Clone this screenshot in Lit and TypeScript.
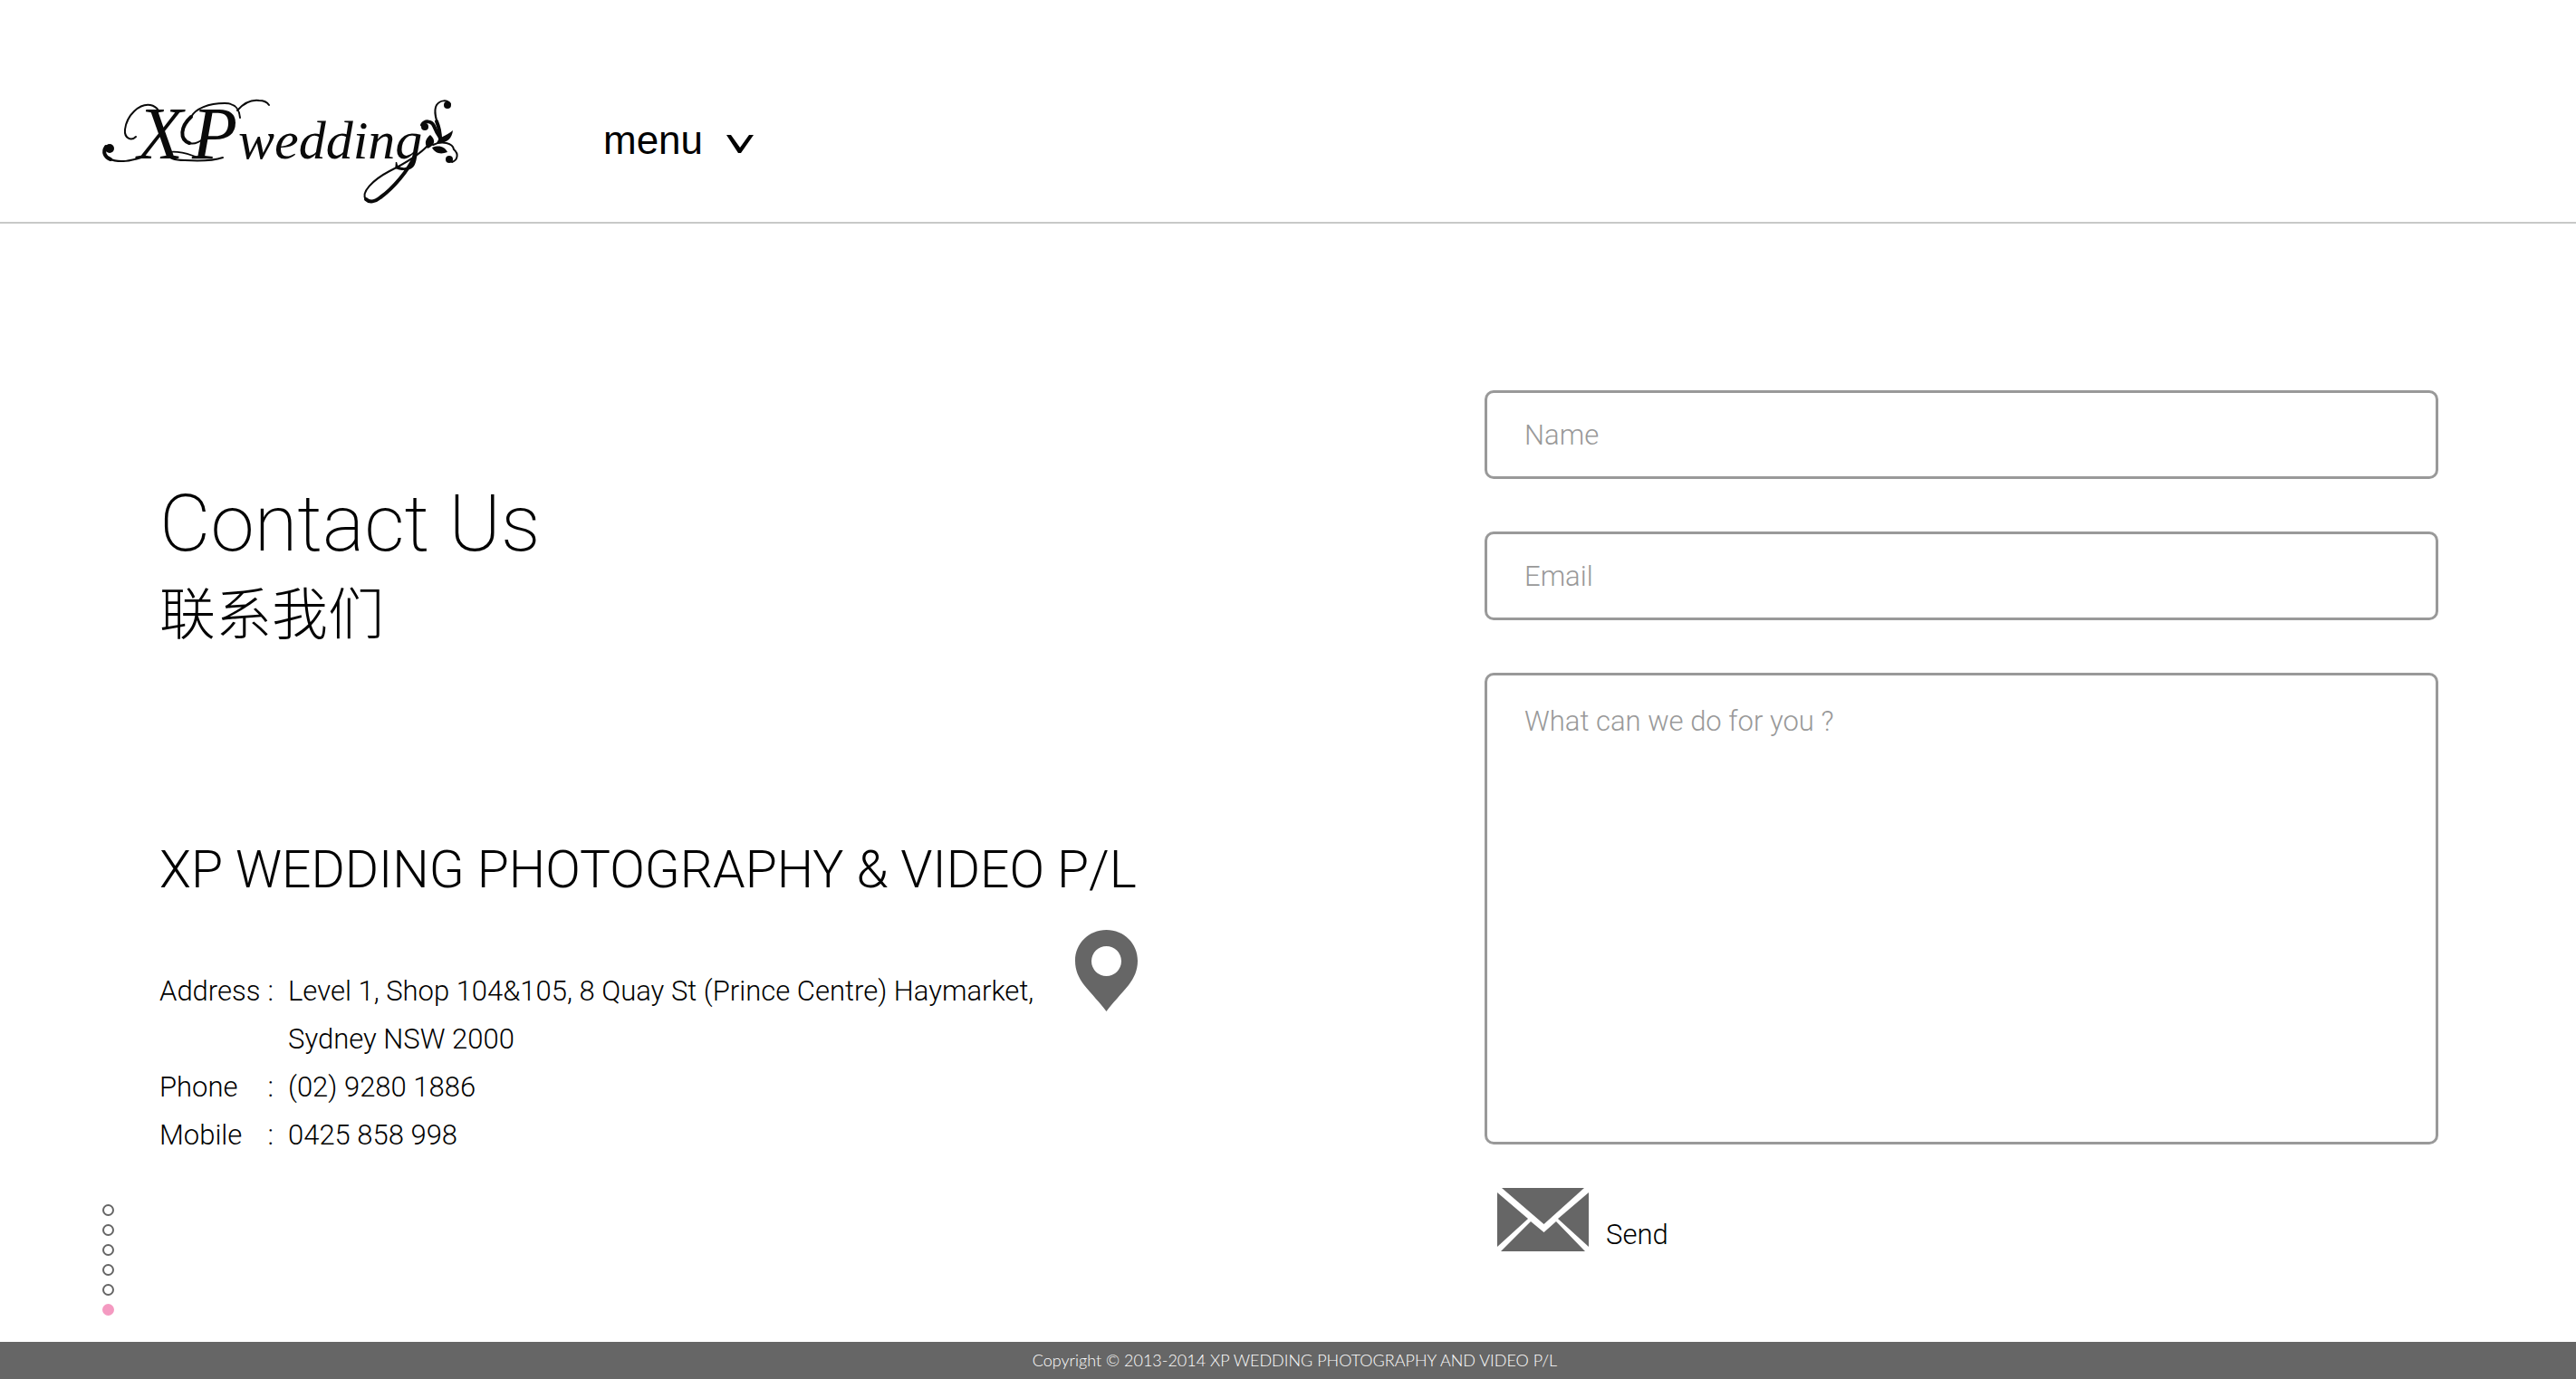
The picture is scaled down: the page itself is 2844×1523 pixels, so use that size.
import { LitElement, html, css, svg } from "lit";
import { customElement, state } from "lit/decorators.js";
import { classMap } from "lit/directives/class-map.js";

const SECTIONS = ["Home", "About", "Gallery", "Packages", "Video", "Contact"];

@customElement("xp-logo")
class XpLogo extends LitElement {
  static styles = css`
    :host {
      display: block;
    }
    .logo {
      display: block;
      width: 394px;
      height: 114px;
      overflow: visible;
    }
    .word {
      font-family: "Liberation Serif", serif;
      font-style: italic;
      fill: #0a0a0a;
    }
    .capital {
      font-size: 82px;
    }
    .small {
      font-size: 60px;
    }
    .hair {
      fill: none;
      stroke: #0a0a0a;
      stroke-linecap: round;
      stroke-width: 2;
    }
    .bold {
      stroke-width: 4;
    }
    .leaf {
      fill: #0a0a0a;
    }
  `;

  render() {
    return html`
      <svg class="logo" viewBox="0 0 394 114" role="img" aria-label="XPwedding">
        <text class="word capital" x="40" y="65">X</text>
        <text class="word capital" x="100" y="65">P</text>
        <text class="word small" x="151" y="65">wedding</text>
        ${svg`
          <circle class="leaf" cx="9" cy="54" r="5" />
          <path class="hair bold" d="M5 52C1 58 4 64 10 66" />
          <path class="hair" d="M8 65C20 71 34 67 44 64" />
          <path class="hair" d="M38 41C33 46 25 43 26 33C28 17 42 4 54 6C59 7 61 9 63 12" />
          <path class="hair" d="M153 20C152 9 147 4 136 4C118 4 104 10 99 19" />
          <path class="hair bold" d="M99 19C87 30 86 44 97 48" />
          <path class="hair" d="M97 48C103 50 108 47 113 43" />
          <path class="hair" d="M134 64C122 68 108 68 92 67C80 67 73 64 73 60C74 56 90 57 106 64" />
          <path class="hair" d="M150 12C157 4 166 0 174 1C179 1 183 3 185 6" />
          <path class="hair bold" d="M346 62C339 78 322 98 308 108C302 113 296 114 292 110" />
          <path class="hair" d="M292 110C286 103 299 89 318 79C334 71 350 62 361 50" />
          <circle class="leaf" cx="382" cy="6" r="4" />
          <path class="hair" d="M385 5C382 0 374 0 370 6C366 13 370 24 373 32" />
          <path class="hair bold" d="M370 24C373 31 374 37 374 44" />
          <circle class="leaf" cx="357" cy="30" r="4" />
          <path class="hair bold" d="M354 28C357 23 364 23 367 29C369 34 371 38 374 42" />
          <path class="leaf" d="M388 34C387 43 381 49 370 48C373 40 380 41 388 34Z" />
          <path class="leaf" d="M363 39C369 44 369 50 360 54C356 48 358 43 363 39Z" />
          <path class="hair" d="M366 50C376 45 388 48 389 55C395 60 393 67 387 69" />
          <path class="leaf" d="M365 53C373 50 379 52 382 58C374 61 368 59 365 53Z" />
          <circle class="leaf" cx="384" cy="66" r="4" />
        `}
      </svg>
    `;
  }
}

@customElement("app-root")
export class AppRoot extends LitElement {
  static styles = css`
    :host {
      display: flex;
      flex-direction: column;
      min-height: 100vh;
      background: #fff;
      color: #000;
      font-family: Roboto, "Noto Sans CJK SC", sans-serif;
      font-weight: 300;
      font-size: 31px;
    }
    *,
    *::before {
      box-sizing: border-box;
    }
    button,
    input,
    textarea {
      font: inherit;
      color: inherit;
    }
    button {
      padding: 0;
      border: 0;
      background: none;
      cursor: pointer;
    }
    .header {
      display: flex;
      align-items: center;
      gap: 160px;
      padding: 110px 112px 21px;
      border-bottom: 2px solid #c8c9c8;
    }
    .menu {
      display: flex;
      align-items: center;
      gap: 26px;
      margin-bottom: 24px;
      font-family: "Liberation Sans", sans-serif;
      font-weight: 400;
      font-size: 44px;
      line-height: 48px;
    }
    .chevron {
      width: 30px;
      height: 20px;
      margin-top: 8px;
    }
    .main {
      flex: 1;
      display: grid;
      grid-template-columns: 13px 1513fr 1053fr;
      padding: 0 152px 0 113px;
    }
    .dots {
      align-self: end;
      display: flex;
      flex-direction: column;
      gap: 9px;
      padding-bottom: 29px;
    }
    .dot {
      width: 13px;
      height: 13px;
      border: 2px solid #666;
      border-radius: 50%;
    }
    .dot.current {
      border-color: #f49ac1;
      background: #f49ac1;
    }
    .info {
      padding: 291px 0 0 50px;
    }
    .title,
    .subtitle,
    .company {
      margin: 0;
      font-weight: 300;
    }
    .title {
      font-size: 87px;
      font-weight: 200;
      line-height: 80px;
    }
    .subtitle {
      margin-top: 20px;
      font-family: "Noto Sans CJK SC", sans-serif;
      font-size: 62px;
      line-height: 72px;
    }
    .company {
      margin-top: 219px;
      font-size: 57px;
      line-height: 64px;
    }
    .details {
      display: flex;
      align-items: flex-start;
      gap: 46px;
      margin-top: 34px;
    }
    .list {
      display: grid;
      grid-template-columns: 126px auto;
      column-gap: 16px;
      margin: 0;
      padding-top: 41px;
      line-height: 53px;
      white-space: nowrap;
    }
    .term {
      display: flex;
      justify-content: space-between;
    }
    .value {
      margin: 0;
    }
    .pin {
      display: block;
      width: 69px;
      height: 90px;
    }
    .form {
      display: flex;
      flex-direction: column;
      align-items: flex-start;
      gap: 48px;
      padding-top: 184px;
    }
    .fields {
      align-self: stretch;
      display: flex;
      flex-direction: column;
      gap: 58px;
    }
    .control {
      display: block;
      width: 100%;
      height: 98px;
      margin: 0;
      padding: 0 41px;
      border: 3px solid #999;
      border-radius: 10px;
      background: #fff;
      outline: none;
      resize: none;
    }
    .control:focus {
      border-color: #666;
    }
    .control::placeholder {
      color: #999;
      opacity: 1;
    }
    .message {
      height: 521px;
      padding: 24px 41px;
      line-height: 53px;
    }
    .send {
      display: flex;
      align-items: flex-end;
      gap: 19px;
      margin-left: 14px;
      line-height: 36px;
    }
    .mail {
      display: block;
      width: 101px;
      height: 70px;
    }
    .footer {
      padding-left: 15px;
      background: #666;
      color: #fff;
      font-family: Lato, sans-serif;
      font-size: 18px;
      line-height: 41px;
      text-align: center;
    }
  `;

  @state() private current = SECTIONS.length - 1;

  private submit(event: Event) {
    event.preventDefault();
  }

  render() {
    return html`
      <header class="header">
        <xp-logo></xp-logo>
        <button class="menu" type="button">
          menu
          <svg class="chevron" viewBox="0 0 30 20" aria-hidden="true">
            <path d="M0 0H5L15 14L25 0H30L16 20H13Z" />
          </svg>
        </button>
      </header>

      <main class="main">
        <nav class="dots" aria-label="Sections">
          ${SECTIONS.map(
            (name, i) => html`
              <button
                class=${classMap({ dot: true, current: i === this.current })}
                type="button"
                aria-label=${name}
                @click=${() => (this.current = i)}
              ></button>
            `
          )}
        </nav>

        <section class="info">
          <h1 class="title">Contact Us</h1>
          <p class="subtitle" lang="zh-CN">联系我们</p>
          <h2 class="company">XP WEDDING PHOTOGRAPHY &amp; VIDEO P/L</h2>
          <div class="details">
            <dl class="list">
              <dt class="term"><span>Address</span><span>:</span></dt>
              <dd class="value">
                Level 1, Shop 104&amp;105, 8 Quay St (Prince Centre) Haymarket,<br />Sydney NSW 2000
              </dd>
              <dt class="term"><span>Phone</span><span>:</span></dt>
              <dd class="value">(02) 9280 1886</dd>
              <dt class="term"><span>Mobile</span><span>:</span></dt>
              <dd class="value">0425 858 998</dd>
            </dl>
            <svg class="pin" viewBox="0 0 69 90" aria-hidden="true">
              <path
                fill="#666"
                fill-rule="evenodd"
                d="M34.500 0C54 0 69 15 69 34C69 45 65 53 59 61C50 72 42 80 34.500 90C27 80 19 72 10 61C4 53 0 45 0 34C0 15 15 0 34.500 0ZM34.500 18A16.500 16.500 0 1 0 34.500 51A16.500 16.500 0 1 0 34.500 18Z"
              />
            </svg>
          </div>
        </section>

        <form class="form" @submit=${this.submit}>
          <div class="fields">
            <input class="control" type="text" name="name" aria-label="Name" placeholder="Name" />
            <input class="control" type="email" name="email" aria-label="Email" placeholder="Email" />
            <textarea
              class="control message"
              name="message"
              aria-label="What can we do for you ?"
              placeholder="What can we do for you ?"
            ></textarea>
          </div>
          <button class="send" type="submit">
            <svg class="mail" viewBox="0 0 101 70" aria-hidden="true">
              <g fill="#666">
                <path d="M5 0H96L51.500 40Z" />
                <path d="M0 5L34 34L0 65Z" />
                <path d="M101 5V65L67 34Z" />
                <path d="M37 37L51.500 49L65 37L97 70H4Z" />
              </g>
            </svg>
            Send
          </button>
        </form>
      </main>

      <footer class="footer">Copyright © 2013-2014 XP WEDDING PHOTOGRAPHY AND VIDEO P/L</footer>
    `;
  }
}
